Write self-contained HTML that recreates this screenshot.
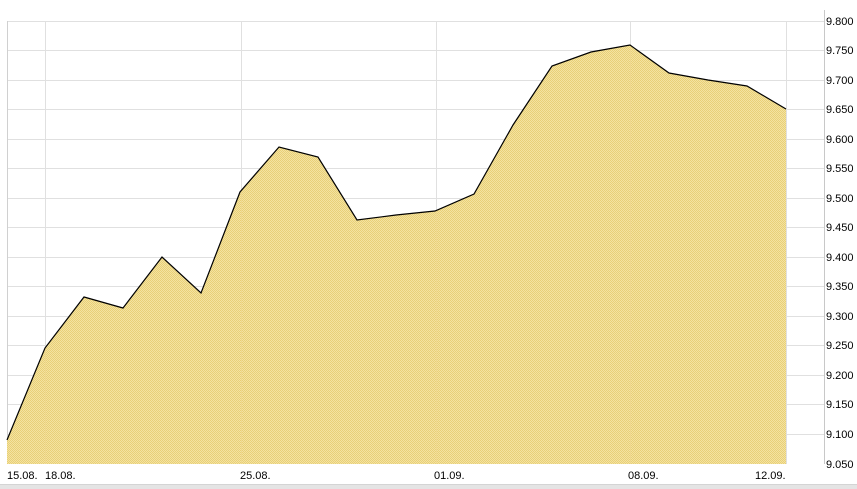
<!DOCTYPE html>
<html><head><style>
html,body{margin:0;padding:0;background:#fff;width:857px;height:489px;overflow:hidden;font-family:"Liberation Sans",sans-serif}
</style></head><body>
<svg width="857" height="489" xmlns="http://www.w3.org/2000/svg" style="position:absolute;left:0;top:0">
<defs>
<pattern id="d" width="2" height="2" patternUnits="userSpaceOnUse">
<rect width="2" height="2" fill="#f4e3a0"/><rect width="1" height="1" fill="#e8cf78"/><rect x="1" y="1" width="1" height="1" fill="#e8cf78"/>
</pattern>
</defs>
<g stroke="#e0e0e0" stroke-width="1">
<line x1="7" y1="21.5" x2="824" y2="21.5"/><line x1="7" y1="50.5" x2="824" y2="50.5"/><line x1="7" y1="80.5" x2="824" y2="80.5"/><line x1="7" y1="109.5" x2="824" y2="109.5"/><line x1="7" y1="139.5" x2="824" y2="139.5"/><line x1="7" y1="168.5" x2="824" y2="168.5"/><line x1="7" y1="198.5" x2="824" y2="198.5"/><line x1="7" y1="227.5" x2="824" y2="227.5"/><line x1="7" y1="257.5" x2="824" y2="257.5"/><line x1="7" y1="286.5" x2="824" y2="286.5"/><line x1="7" y1="316.5" x2="824" y2="316.5"/><line x1="7" y1="345.5" x2="824" y2="345.5"/><line x1="7" y1="375.5" x2="824" y2="375.5"/><line x1="7" y1="404.5" x2="824" y2="404.5"/><line x1="7" y1="434.5" x2="824" y2="434.5"/>
<line x1="45.5" y1="21" x2="45.5" y2="464"/><line x1="241.5" y1="21" x2="241.5" y2="464"/><line x1="436.5" y1="21" x2="436.5" y2="464"/><line x1="630.5" y1="21" x2="630.5" y2="464"/><line x1="786.5" y1="21" x2="786.5" y2="464"/>
</g>
<line x1="7.5" y1="21" x2="7.5" y2="464" stroke="#d0d0d0"/>
<line x1="824.5" y1="10" x2="824.5" y2="464" stroke="#c8c8c8"/>
<polygon fill="url(#d)" points="7,440 45,348 84,297 123,308 162,257 201,293 240,192 279,147 318,157 357,220 396,215 435,211 474,194 513,125 552,66 591,52 630,45 669,73 708,80 747,86 786,109 786,464 7,464"/>
<g stroke="#f0d890" stroke-width="1" opacity="0.7">
<line x1="45.5" y1="348" x2="45.5" y2="464"/><line x1="241.5" y1="192" x2="241.5" y2="464"/><line x1="436.5" y1="211" x2="436.5" y2="464"/><line x1="630.5" y1="45" x2="630.5" y2="464"/>
</g>
<polyline fill="none" stroke="#000" stroke-width="1.2" points="7,440 45,348 84,297 123,308 162,257 201,293 240,192 279,147 318,157 357,220 396,215 435,211 474,194 513,125 552,66 591,52 630,45 669,73 708,80 747,86 786,109"/>
<g font-size="11" fill="#000" font-family="Liberation Sans,sans-serif">
<text x="826" y="25">9.800</text><text x="826" y="54">9.750</text><text x="826" y="84">9.700</text><text x="826" y="113">9.650</text><text x="826" y="143">9.600</text><text x="826" y="172">9.550</text><text x="826" y="202">9.500</text><text x="826" y="231">9.450</text><text x="826" y="261">9.400</text><text x="826" y="290">9.350</text><text x="826" y="320">9.300</text><text x="826" y="349">9.250</text><text x="826" y="379">9.200</text><text x="826" y="408">9.150</text><text x="826" y="438">9.100</text><text x="826" y="468">9.050</text>
<text x="7" y="479">15.08.</text><text x="45" y="479">18.08.</text><text x="240" y="479">25.08.</text><text x="434" y="479">01.09.</text><text x="628" y="479">08.09.</text><text x="755" y="479">12.09.</text>
</g>
<rect x="0" y="484" width="857" height="5" fill="#e4e4e4"/>
<line x1="0" y1="484.5" x2="857" y2="484.5" stroke="#d4d4d4"/>
</svg>
</body></html>
